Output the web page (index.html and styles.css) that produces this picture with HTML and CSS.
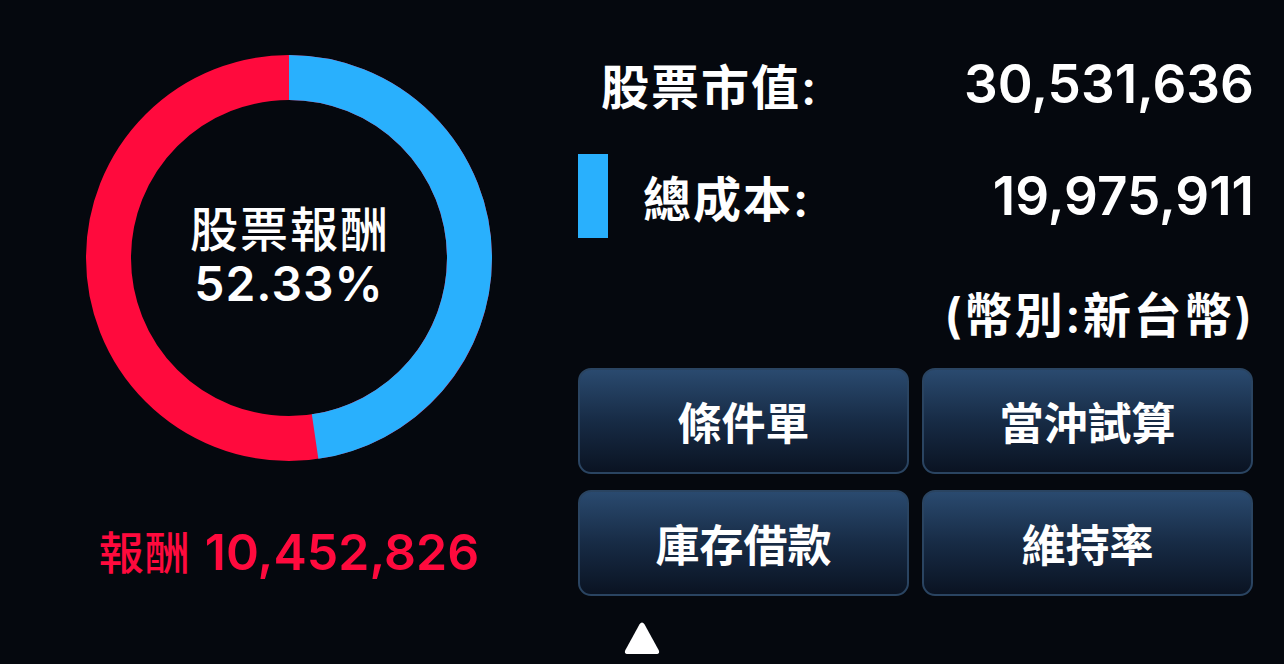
FILE: index.html
```html
<!DOCTYPE html>
<html lang="zh-Hant">
<head>
<meta charset="utf-8">
<title>股票報酬</title>
<link rel="stylesheet" href="styles.css">
</head>
<body>
<div class="screen">
  <section class="left">
    <div class="donut">
      <svg class="ring" viewBox="0 0 406 406" width="406" height="406">
        <circle cx="203" cy="203" r="180.5" fill="none" stroke="#ff0a3d" stroke-width="45"/>
        <circle cx="203" cy="203" r="180.5" fill="none" stroke="#29b0fd" stroke-width="45"
          stroke-dasharray="540.6 1134.1" transform="rotate(-90 203 203)"/>
      </svg>
      <div class="donut-text">
        <div class="donut-title">股票報酬</div>
        <div class="donut-pct">52.33%</div>
      </div>
    </div>
    <div class="profit"><span class="profit-label">報酬</span> <span class="profit-num">10,452,826</span></div>
  </section>
  <section class="right">
    <div class="row row-market">
      <span class="label">股票市值:</span>
      <span class="value">30,531,636</span>
    </div>
    <div class="row row-cost">
      <span class="bar"></span>
      <span class="label label-cost">總成本:</span>
      <span class="value">19,975,911</span>
    </div>
    <div class="row row-currency">
      <span class="currency">(幣別:新台幣)</span>
    </div>
    <div class="buttons">
      <button class="btn">條件單</button>
      <button class="btn">當沖試算</button>
      <button class="btn">庫存借款</button>
      <button class="btn">維持率</button>
    </div>
  </section>
  <div class="handle">
    <svg viewBox="0 0 36 35" width="36" height="35">
      <path d="M15.4 3.6 Q18 -0.4 20.6 3.6 L34.6 29 Q36.4 33 32 33 L4 33 Q-0.4 33 1.4 29 Z" fill="#ffffff"/>
    </svg>
  </div>
</div>
</body>
</html>
```

FILE: styles.css
```css
* { box-sizing: border-box; }
html, body {
  margin: 0;
  padding: 0;
  background: #05080e;
}
body {
  width: 1284px;
  height: 664px;
  overflow: hidden;
  font-family: "Inter", "Noto Sans CJK TC", sans-serif;
  color: #ffffff;
}
.screen {
  position: relative;
  display: flex;
  width: 1284px;
  height: 664px;
}
.left {
  width: 578px;
  display: flex;
  flex-direction: column;
  align-items: center;
  padding-top: 55px;
}
.donut {
  position: relative;
  width: 406px;
  height: 406px;
}
.ring { display: block; }
.donut-text {
  position: absolute;
  inset: 0;
  display: flex;
  flex-direction: column;
  align-items: center;
  justify-content: center;
  padding-bottom: 4px;
}
.donut-title {
  font-size: 48px;
  font-weight: 500;
  line-height: 56px;
  letter-spacing: 2px;
  padding-left: 2px;
}
.donut-pct {
  font-size: 48px;
  font-weight: 600;
  line-height: 52px;
  letter-spacing: 1px;
}
.profit {
  margin-top: 62px;
  color: #ff0a3d;
  font-size: 50px;
  line-height: 58px;
  white-space: nowrap;
}
.profit-label { font-size: 45px; font-weight: 500; letter-spacing: 1px; }
.profit-num { font-weight: 600; }
.right {
  width: 675px;
  display: flex;
  flex-direction: column;
}
.row {
  display: flex;
  align-items: center;
  white-space: nowrap;
}
.row-market {
  margin-top: 55px;
  height: 58px;
  padding-left: 23px;
}
.row-cost {
  margin-top: 41px;
  height: 84px;
}
.row-currency {
  margin-top: 45px;
  height: 58px;
  justify-content: flex-end;
}
.bar {
  width: 30px;
  height: 84px;
  background: #29b0fd;
  margin-right: 35px;
}
.label {
  font-size: 48px;
  font-weight: 600;
  letter-spacing: 2px;
}
.value {
  margin-left: auto;
  font-size: 53px;
  font-weight: 600;
  margin-right: -1px;
}
.currency {
  font-size: 48px;
  font-weight: 600;
  letter-spacing: 2.5px;
  margin-right: -2px;
}
.buttons {
  margin-top: 27px;
  display: grid;
  grid-template-columns: 331px 331px;
  grid-template-rows: 106px 106px;
  column-gap: 13px;
  row-gap: 16px;
}
.btn {
  font-family: "Inter", "Noto Sans CJK TC", sans-serif;
  font-size: 44px;
  font-weight: 700;
  color: #ffffff;
  border: 2px solid #2a4461;
  border-radius: 13px;
  background: linear-gradient(to bottom, #2a4a6f 0%, #172b45 50%, #0a1322 100%);
  padding: 0;
}
.handle {
  position: absolute;
  left: 624px;
  top: 621px;
  width: 36px;
  height: 35px;
}
.handle svg { display: block; }
```
